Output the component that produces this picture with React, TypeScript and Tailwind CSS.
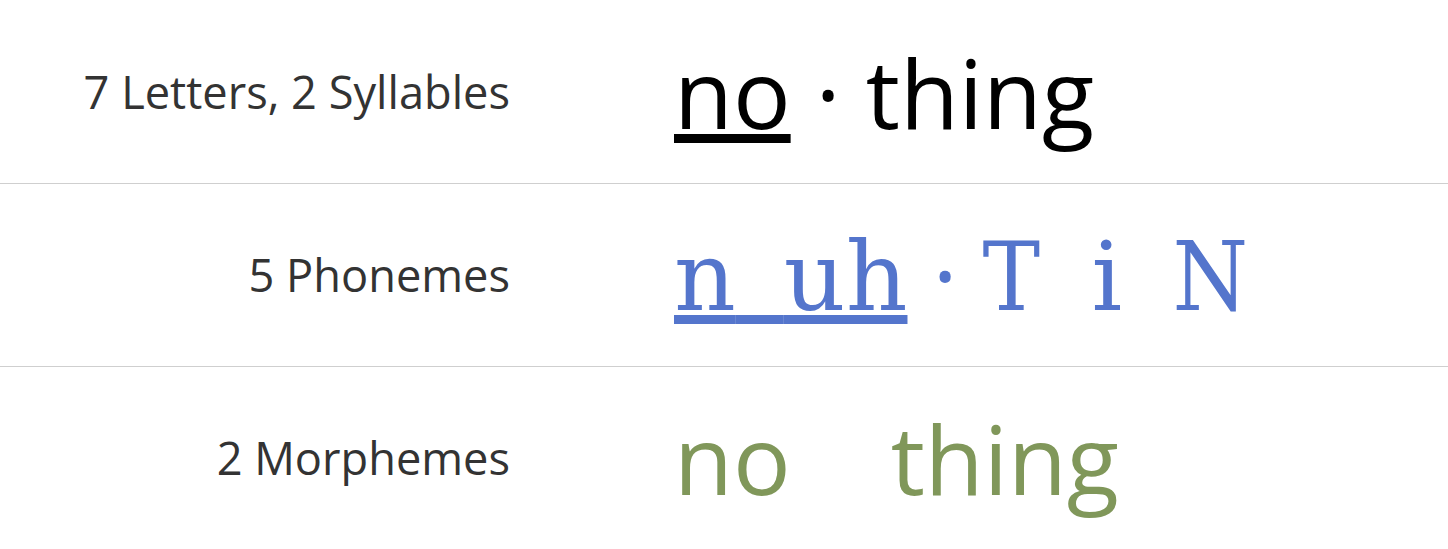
import React from "react";

const sans = "font-['Open_Sans',sans-serif]";
const serif = "font-['DejaVu_Serif',serif]";
const serifCond = "font-['DejaVu_Serif_Condensed','DejaVu_Serif',serif] font-stretch-condensed";

export default function App() {
  return (
    <div className={`w-[1448px] h-[549px] bg-white ${sans}`}>
      <div className="flex items-center h-[184px] border-b border-[#cfcfcf]">
        <div className="w-[510px] text-right text-[45.2px] text-[#333333]">7 Letters, 2 Syllables</div>
        <div className="ml-[164px] text-[96px] text-black whitespace-pre">
          <span className="underline decoration-[9px] underline-offset-[5px]">no</span>
          <span> · </span>
          <span>thing</span>
        </div>
      </div>
      <div className="flex items-center h-[183px] border-b border-[#cfcfcf]">
        <div className="w-[510px] text-right text-[45.2px] text-[#333333]">5 Phonemes</div>
        <div className="ml-[164px] text-[96px] text-[#5475cc] whitespace-pre">
          <span className={`${serif} underline decoration-[9px] underline-offset-[5px]`}>n{"\u2002"}uh</span>
          <span className={sans}> · </span>
          <span className={`${serifCond} inline-block w-[109px]`}>T</span>
          <span className={`${serif} inline-block w-[81px]`}>i</span>
          <span className={serifCond}>N</span>
        </div>
      </div>
      <div className="flex items-center h-[182px]">
        <div className="w-[510px] text-right text-[45.2px] text-[#333333]">2 Morphemes</div>
        <div className="ml-[164px] text-[96px] text-[#80975a] whitespace-pre">
          <span>no</span>
          <span className="inline-block w-[100px]"></span>
          <span>thing</span>
        </div>
      </div>
    </div>
  );
}
